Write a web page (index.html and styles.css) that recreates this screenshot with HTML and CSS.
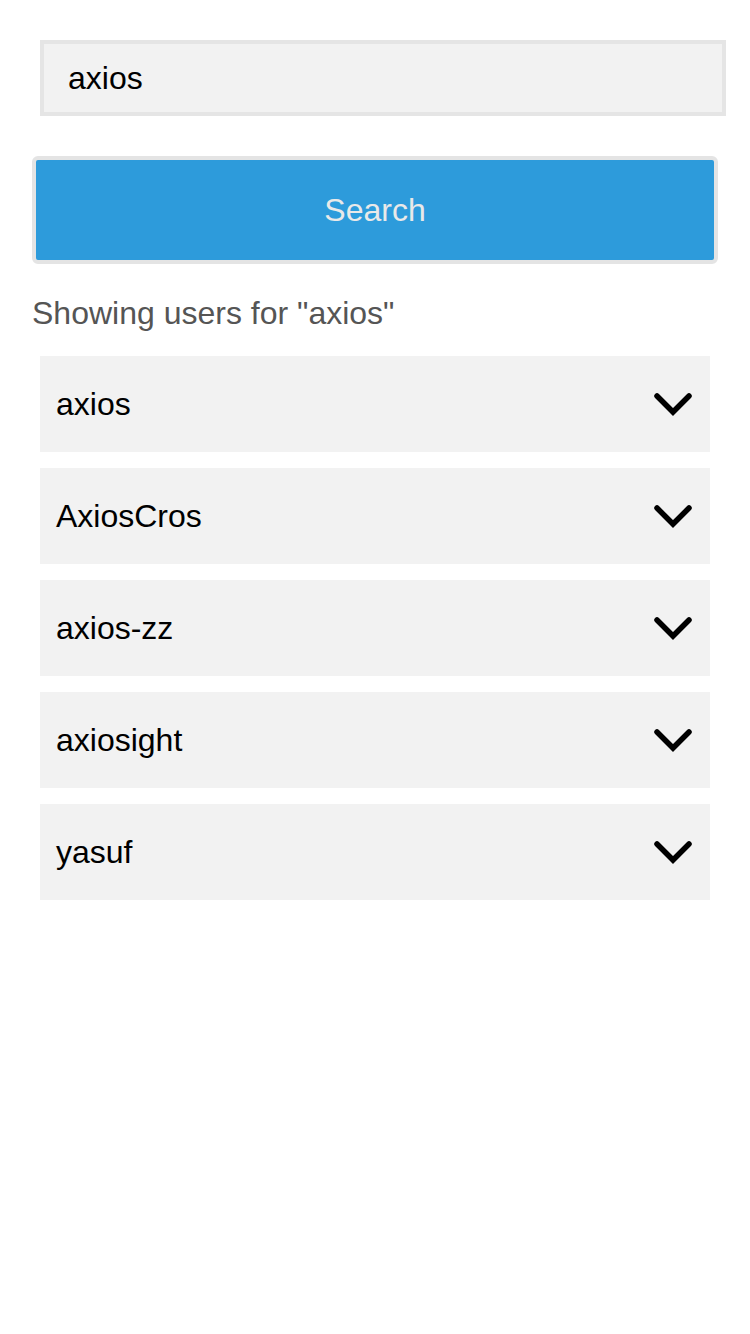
FILE: index.html
```html
<!DOCTYPE html>
<html lang="en">
<head>
<meta charset="utf-8">
<title>User search</title>
<link rel="stylesheet" href="styles.css">
</head>
<body>
<main class="page">
  <form class="search-form">
    <input class="search-input" type="text" value="axios">
    <button class="search-btn" type="button">Search</button>
  </form>
  <p class="result-label">Showing users for "axios"</p>
  <ul class="user-list">
    <li class="user-item"><span class="user-name">axios</span><svg class="chevron" viewBox="0 0 38 24" width="38" height="24"><polyline points="3,3 19,19 35,3"/></svg></li>
    <li class="user-item"><span class="user-name">AxiosCros</span><svg class="chevron" viewBox="0 0 38 24" width="38" height="24"><polyline points="3,3 19,19 35,3"/></svg></li>
    <li class="user-item"><span class="user-name">axios-zz</span><svg class="chevron" viewBox="0 0 38 24" width="38" height="24"><polyline points="3,3 19,19 35,3"/></svg></li>
    <li class="user-item"><span class="user-name">axiosight</span><svg class="chevron" viewBox="0 0 38 24" width="38" height="24"><polyline points="3,3 19,19 35,3"/></svg></li>
    <li class="user-item"><span class="user-name">yasuf</span><svg class="chevron" viewBox="0 0 38 24" width="38" height="24"><polyline points="3,3 19,19 35,3"/></svg></li>
  </ul>
</main>
</body>
</html>
```
FILE: styles.css
```css
html, body {
  margin: 0;
  padding: 0;
  background: #ffffff;
  font-family: "Liberation Sans", Arial, sans-serif;
}

.page {
  padding: 40px 32px 0 32px;
}

.search-form {
  display: flex;
  flex-direction: column;
  margin: 0;
}

.search-input {
  box-sizing: border-box;
  margin: 0 0 0 8px;
  width: 686px;
  height: 76px;
  border: 4px solid #e5e5e5;
  background: #f2f2f2;
  padding: 0 0 0 24px;
  font-family: "Liberation Sans", Arial, sans-serif;
  font-size: 32px;
  color: #000;
  outline: none;
}

.search-btn {
  box-sizing: border-box;
  margin: 40px 0 0 0;
  width: 686px;
  height: 108px;
  border: 4px solid #e4e4e4;
  border-radius: 6px;
  background: #2d9bdb;
  color: #e9e9e9;
  font-family: "Liberation Sans", Arial, sans-serif;
  font-size: 32px;
  padding: 0;
}

.result-label {
  margin: 31px 0 0 0;
  font-size: 32px;
  line-height: 36px;
  color: #555555;
}

.user-list {
  list-style: none;
  margin: 25px 0 0 8px;
  padding: 0;
  width: 670px;
  display: flex;
  flex-direction: column;
  gap: 16px;
}

.user-item {
  box-sizing: border-box;
  height: 96px;
  background: #f2f2f2;
  display: flex;
  align-items: center;
  justify-content: space-between;
  padding: 0 18px 0 16px;
}

.user-name {
  font-size: 32px;
  color: #000;
}

.chevron {
  display: block;
  margin-top: 2px;
}

.chevron polyline {
  fill: none;
  stroke: #000;
  stroke-width: 5.5;
  stroke-linecap: round;
  stroke-linejoin: miter;
}
```
